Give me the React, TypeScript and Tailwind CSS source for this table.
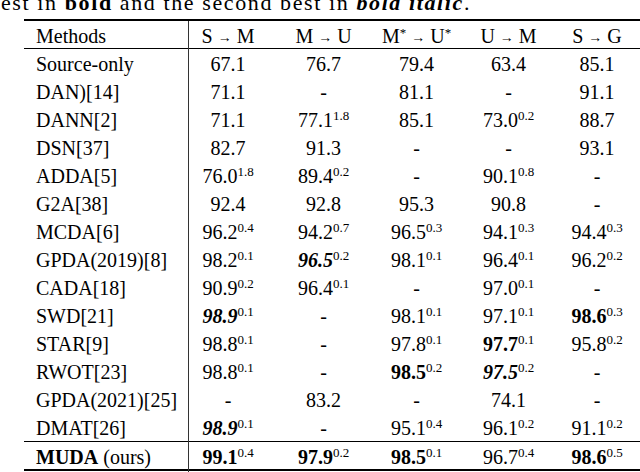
import React from "react";

type Cell = { v: string; s?: string; w?: "b" | "bi" };

const c = (v: string, s?: string, w?: "b" | "bi"): Cell => ({ v, s, w });

const rows: { m: React.ReactNode; cells: Cell[] }[] = [
  { m: "Source-only", cells: [c("67.1"), c("76.7"), c("79.4"), c("63.4"), c("85.1")] },
  { m: "DAN)[14]", cells: [c("71.1"), c("-"), c("81.1"), c("-"), c("91.1")] },
  { m: "DANN[2]", cells: [c("71.1"), c("77.1", "1.8"), c("85.1"), c("73.0", "0.2"), c("88.7")] },
  { m: "DSN[37]", cells: [c("82.7"), c("91.3"), c("-"), c("-"), c("93.1")] },
  { m: "ADDA[5]", cells: [c("76.0", "1.8"), c("89.4", "0.2"), c("-"), c("90.1", "0.8"), c("-")] },
  { m: "G2A[38]", cells: [c("92.4"), c("92.8"), c("95.3"), c("90.8"), c("-")] },
  { m: "MCDA[6]", cells: [c("96.2", "0.4"), c("94.2", "0.7"), c("96.5", "0.3"), c("94.1", "0.3"), c("94.4", "0.3")] },
  { m: "GPDA(2019)[8]", cells: [c("98.2", "0.1"), c("96.5", "0.2", "bi"), c("98.1", "0.1"), c("96.4", "0.1"), c("96.2", "0.2")] },
  { m: "CADA[18]", cells: [c("90.9", "0.2"), c("96.4", "0.1"), c("-"), c("97.0", "0.1"), c("-")] },
  { m: "SWD[21]", cells: [c("98.9", "0.1", "bi"), c("-"), c("98.1", "0.1"), c("97.1", "0.1"), c("98.6", "0.3", "b")] },
  { m: "STAR[9]", cells: [c("98.8", "0.1"), c("-"), c("97.8", "0.1"), c("97.7", "0.1", "b"), c("95.8", "0.2")] },
  { m: "RWOT[23]", cells: [c("98.8", "0.1"), c("-"), c("98.5", "0.2", "b"), c("97.5", "0.2", "bi"), c("-")] },
  { m: "GPDA(2021)[25]", cells: [c("-"), c("83.2"), c("-"), c("74.1"), c("-")] },
  { m: "DMAT[26]", cells: [c("98.9", "0.1", "bi"), c("-"), c("95.1", "0.4"), c("96.1", "0.2"), c("91.1", "0.2")] },
];

const muda: Cell[] = [c("99.1", "0.4", "b"), c("97.9", "0.2", "b"), c("98.5", "0.1", "b"), c("96.7", "0.4"), c("98.6", "0.5", "b")];

const colPad = ["pr-[10px]", "", "", "", ""];

function Val({ cell }: { cell: Cell }) {
  const main =
    cell.w === "b" ? "font-bold" : cell.w === "bi" ? "font-bold italic" : "";
  return (
    <span className="whitespace-nowrap">
      <span className={main}>{cell.v}</span>
      {cell.s && (
        <span className="relative top-[-7px] text-[13px] font-normal not-italic">{cell.s}</span>
      )}
    </span>
  );
}

const grid = "grid grid-cols-[165px_88px_93px_93px_91px_86px] items-center";

function Arrow() {
  return <span className="text-[14px] mx-[5px] relative top-[-1px]">→</span>;
}

export default function App() {
  return (
    <div className="w-[640px] h-[472px] overflow-hidden bg-white text-black font-['Liberation_Serif',serif] text-[20px]">
      <div className="h-[19px] overflow-hidden">
        <div className="mt-[-8px] leading-[22px] whitespace-nowrap text-[22px] tracking-[1.6px] pl-[1px]">
          est in <span className="font-bold">bold</span> and the second best in{" "}
          <span className="font-bold italic">bold italic</span>.
        </div>
      </div>
      <div className="pl-[24px]">
        <div className={`${grid} h-[30px] border-t-2 border-b border-black`}>
          <div className="h-full flex items-center pl-[12px] border-r border-[#333]">Methods</div>
          <div className={`text-center ${colPad[0]}`}>S<Arrow />M</div>
          <div className="text-center">M<Arrow />U</div>
          <div className="text-center">
            M<span className="relative top-[-6px] text-[13px]">*</span>
            <Arrow />U<span className="relative top-[-6px] text-[13px]">*</span>
          </div>
          <div className="text-center">U<Arrow />M</div>
          <div className="text-center">S<Arrow />G</div>
        </div>
        {rows.map((r, i) => (
          <div key={i} className={`${grid} h-[28px]`}>
            <div className="h-full flex items-center pl-[12px] border-r border-[#333] whitespace-nowrap">{r.m}</div>
            {r.cells.map((cell, j) => (
              <div key={j} className={`text-center ${colPad[j]}`}>
                <Val cell={cell} />
              </div>
            ))}
          </div>
        ))}
        <div className={`${grid} h-[30px] border-t border-b-2 border-black`}>
          <div className="h-full flex items-center pl-[12px] border-r border-[#333] whitespace-nowrap">
            <span className="font-bold">MUDA</span>&nbsp;(ours)
          </div>
          {muda.map((cell, j) => (
            <div key={j} className={`text-center ${colPad[j]}`}>
              <Val cell={cell} />
            </div>
          ))}
        </div>
      </div>
    </div>
  );
}
